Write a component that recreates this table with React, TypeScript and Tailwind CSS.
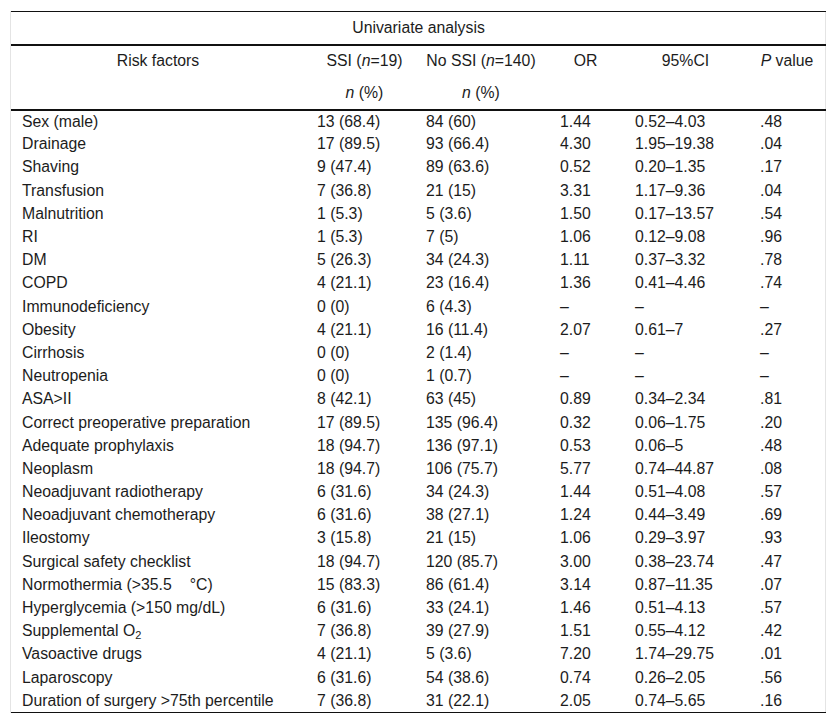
const rows: [React.ReactNode, string, string, string, string, string][] = [
  ['Sex (male)', '13 (68.4)', '84 (60)', '1.44', '0.52–4.03', '.48'],
  ['Drainage', '17 (89.5)', '93 (66.4)', '4.30', '1.95–19.38', '.04'],
  ['Shaving', '9 (47.4)', '89 (63.6)', '0.52', '0.20–1.35', '.17'],
  ['Transfusion', '7 (36.8)', '21 (15)', '3.31', '1.17–9.36', '.04'],
  ['Malnutrition', '1 (5.3)', '5 (3.6)', '1.50', '0.17–13.57', '.54'],
  ['RI', '1 (5.3)', '7 (5)', '1.06', '0.12–9.08', '.96'],
  ['DM', '5 (26.3)', '34 (24.3)', '1.11', '0.37–3.32', '.78'],
  ['COPD', '4 (21.1)', '23 (16.4)', '1.36', '0.41–4.46', '.74'],
  ['Immunodeficiency', '0 (0)', '6 (4.3)', '–', '–', '–'],
  ['Obesity', '4 (21.1)', '16 (11.4)', '2.07', '0.61–7', '.27'],
  ['Cirrhosis', '0 (0)', '2 (1.4)', '–', '–', '–'],
  ['Neutropenia', '0 (0)', '1 (0.7)', '–', '–', '–'],
  ['ASA>II', '8 (42.1)', '63 (45)', '0.89', '0.34–2.34', '.81'],
  ['Correct preoperative preparation', '17 (89.5)', '135 (96.4)', '0.32', '0.06–1.75', '.20'],
  ['Adequate prophylaxis', '18 (94.7)', '136 (97.1)', '0.53', '0.06–5', '.48'],
  ['Neoplasm', '18 (94.7)', '106 (75.7)', '5.77', '0.74–44.87', '.08'],
  ['Neoadjuvant radiotherapy', '6 (31.6)', '34 (24.3)', '1.44', '0.51–4.08', '.57'],
  ['Neoadjuvant chemotherapy', '6 (31.6)', '38 (27.1)', '1.24', '0.44–3.49', '.69'],
  ['Ileostomy', '3 (15.8)', '21 (15)', '1.06', '0.29–3.97', '.93'],
  ['Surgical safety checklist', '18 (94.7)', '120 (85.7)', '3.00', '0.38–23.74', '.47'],
  [
    <>
      Normothermia (&gt;35.5<span className="inline-block w-[18px]" />°C)
    </>,
    '15 (83.3)', '86 (61.4)', '3.14', '0.87–11.35', '.07',
  ],
  ['Hyperglycemia (>150 mg/dL)', '6 (31.6)', '33 (24.1)', '1.46', '0.51–4.13', '.57'],
  [
    <>
      Supplemental O<sub className="text-[11px] relative top-[3px]">2</sub>
    </>,
    '7 (36.8)', '39 (27.9)', '1.51', '0.55–4.12', '.42',
  ],
  ['Vasoactive drugs', '4 (21.1)', '5 (3.6)', '7.20', '1.74–29.75', '.01'],
  ['Laparoscopy', '6 (31.6)', '54 (38.6)', '0.74', '0.26–2.05', '.56'],
  ['Duration of surgery >75th percentile', '7 (36.8)', '31 (22.1)', '2.05', '0.74–5.65', '.16'],
];

export default function App() {
  return (
    <div className="bg-white w-[837px] h-[724px] pt-[11px] pl-[10px] text-[15.8px] leading-[20px] text-[#1c1c1c] font-['Liberation_Sans',Arial,sans-serif]">
      <div className="w-[816px] border-x border-[#e4e4e4]">
        <table className="w-[815px] table-fixed border-collapse">
          <colgroup>
            <col className="w-[294px]" />
            <col className="w-[109px]" />
            <col className="w-[134px]" />
            <col className="w-[75px]" />
            <col className="w-[125px]" />
            <col className="w-[78px]" />
          </colgroup>
          <thead>
            <tr className="border-t border-[#111] border-b-2 border-b-[#111]">
              <th colSpan={6} className="h-[33px] font-normal text-center">
                Univariate analysis
              </th>
            </tr>
            <tr>
              <th className="h-[32px] font-normal text-center">Risk factors</th>
              <th className="font-normal text-center pl-[10px] whitespace-nowrap">
                SSI (<i>n</i>=19)
              </th>
              <th className="font-normal text-center whitespace-nowrap">
                No SSI (<i>n</i>=140)
              </th>
              <th className="font-normal text-center">OR</th>
              <th className="font-normal text-center">95%CI</th>
              <th className="font-normal text-center">
                <i>P</i> value
              </th>
            </tr>
            <tr className="border-b-2 border-[#111]">
              <th className="h-[33px]" />
              <th className="font-normal text-center pl-[10px]">
                <i>n</i> (%)
              </th>
              <th className="font-normal text-center">
                <i>n</i> (%)
              </th>
              <th />
              <th />
              <th />
            </tr>
          </thead>
          <tbody>
            {rows.map((r, i) => (
              <tr key={i} className={i === rows.length - 1 ? 'border-b border-[#111]' : ''}>
                <td className="h-[23.2px] pl-[11px] whitespace-nowrap">{r[0]}</td>
                <td className="pl-[12px]">{r[1]}</td>
                <td className="pl-[12px]">{r[2]}</td>
                <td className="pl-[12px]">{r[3]}</td>
                <td className="pl-[12px]">{r[4]}</td>
                <td className="pl-[12px]">{r[5]}</td>
              </tr>
            ))}
          </tbody>
        </table>
      </div>
    </div>
  );
}
